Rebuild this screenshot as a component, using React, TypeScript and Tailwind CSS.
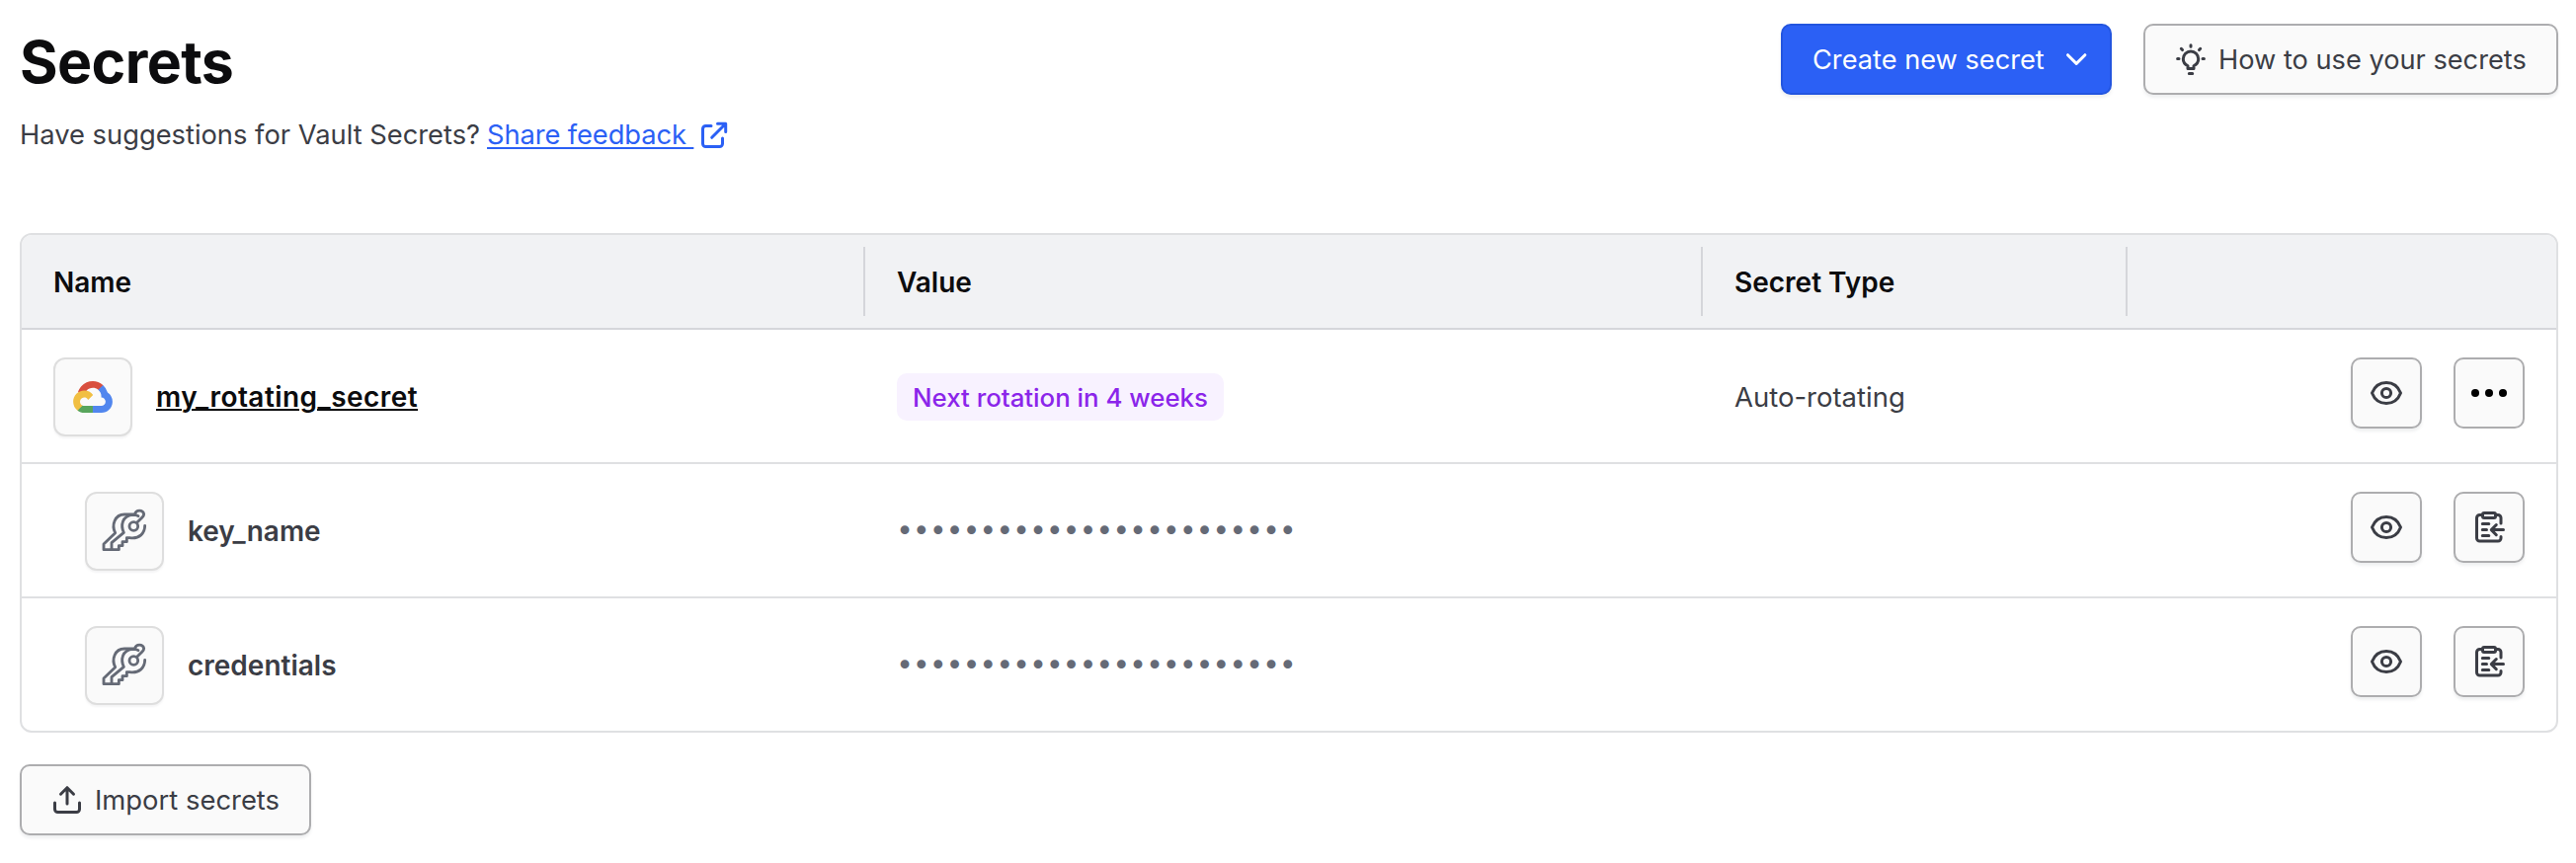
import type { ReactNode } from "react";

const stroke = {
  fill: "none",
  stroke: "currentColor",
  strokeLinecap: "round" as const,
  strokeLinejoin: "round" as const,
};

function EyeIcon() {
  return (
    <svg className="h-8 w-8" viewBox="0 0 32 32" {...stroke} strokeWidth="3">
      <path d="M1.5 16C4 9.500 9.300 5.500 16 5.500S28 9.500 30.500 16C28 22.500 22.700 26.500 16 26.500S4 22.500 1.500 16Z" />
      <circle cx="16" cy="16" r="4.600" />
    </svg>
  );
}

function ClipboardIcon() {
  return (
    <svg className="h-8 w-8" viewBox="0 0 32 32" {...stroke} strokeWidth="3">
      <path d="M8.500 3.500H6.500A3 3 0 0 0 3.500 6.500V27A3 3 0 0 0 6.500 30H25A3 3 0 0 0 28 27V25.500M23.500 3.500H25A3 3 0 0 1 28 6.500V12" />
      <rect x="9.500" y="1.500" width="13" height="5" rx="1.500" />
      <path d="M9.300 12.600H15.800M9.300 18.600H13.500M9.300 24.600H15.800M19 18.600H30.500M23.300 13.500L18.300 18.600L23.300 23.700" />
    </svg>
  );
}

function DotsIcon() {
  return (
    <svg className="h-8 w-9 text-black" viewBox="0 0 36 32" fill="currentColor">
      <circle cx="4" cy="16" r="4" />
      <circle cx="18" cy="16" r="4" />
      <circle cx="32" cy="16" r="4" />
    </svg>
  );
}

function ExternalIcon() {
  return (
    <svg className="h-7 w-7" viewBox="0 0 28 28" {...stroke} strokeWidth="3">
      <path d="M11 4.500H5.500A3 3 0 0 0 2.500 7.500V22.500A3 3 0 0 0 5.500 25.500H19.500A3 3 0 0 0 22.500 22.500V17M17.500 2.300H25.700V10.500M25.200 2.800L11.700 16.300" />
    </svg>
  );
}

function BulbIcon() {
  return (
    <svg className="h-8 w-8" viewBox="0 0 32 32" {...stroke} strokeWidth="3">
      <path d="M13 25.500V22.800C10.300 21.300 8.300 18.600 8.300 15.700A7.700 7.700 0 0 1 23.700 15.700C23.700 18.600 21.700 21.300 19 22.800V25.500ZM14.300 30.500H17.700M16 1.700V3.300M6.300 5.300L7.500 6.600M25.700 5.300L24.500 6.600M2.600 15.600H4M28 15.600H29.400" />
    </svg>
  );
}

function ChevronIcon() {
  return (
    <svg className="h-8 w-8" viewBox="0 0 32 32" {...stroke} strokeWidth="3">
      <path d="M7.500 11.700L16.200 20.400L24.900 11.700" />
    </svg>
  );
}

function UploadIcon() {
  return (
    <svg className="h-8 w-8" viewBox="0 0 32 32" {...stroke} strokeWidth="3">
      <path d="M3.500 19V25.500A3 3 0 0 0 6.500 28.500H25.500A3 3 0 0 0 28.500 25.500V19M16 20V3.700M9.500 10.200L16 3.700L22.500 10.200" />
    </svg>
  );
}

function KeysIcon() {
  return (
    <svg className="h-12 w-12 text-[#656a76]" viewBox="186 102 144 144" {...stroke} strokeWidth="8.500">
      <path d="M219 230V209L256 178C246 158 250 126 284 124C290 124 296 125 300 128" />
      <path d="M286 123H258C228 123 218 156 230 179L195 213V230H241V218H252V206H265V194H274C304 198 320 180 320 157" />
      <path d="M290 122C293 108 314 108 317 122C317 126 315 129 312 132L296 148" />
      <circle cx="286" cy="159" r="13" />
    </svg>
  );
}

function GoogleCloudLogo() {
  return (
    <svg className="h-8 w-10" viewBox="0 0 256 206">
      <path fill="#d9503f" d="M170.252 56.819l22.253-22.253 1.483-9.370C153.437-11.677 88.976-7.496 52.420 33.920 42.267 45.423 34.734 59.764 30.717 74.573l7.970-1.123 44.505-7.340 3.436-3.513c19.797-21.742 53.270-24.667 76.128-6.168l7.496.390z" />
      <path fill="#5186ee" d="M224.205 73.918a100.249 100.249 0 0 0-30.217-48.722l-31.232 31.232a55.515 55.515 0 0 1 20.379 44.037v5.544c15.350 0 27.797 12.445 27.797 27.796 0 15.352-12.446 27.573-27.797 27.573h-55.671l-5.466 5.934v33.340l5.466 5.231h55.670c39.930.311 72.553-31.494 72.864-71.424a72.303 72.303 0 0 0-31.793-60.540" />
      <path fill="#58a55c" d="M71.870 205.796h55.593V161.290H71.870a27.275 27.275 0 0 1-11.400-2.498l-7.887 2.420-22.409 22.253-1.952 7.574c12.567 9.489 27.900 14.825 43.648 14.757" />
      <path fill="#f1bf42" d="M71.870 61.425C31.940 61.664-.237 94.228.002 134.158a72.301 72.301 0 0 0 28.222 56.880l32.248-32.246c-13.990-6.322-20.208-22.786-13.887-36.776 6.320-13.990 22.786-20.208 36.775-13.888a27.796 27.796 0 0 1 13.887 13.888l32.248-32.248A72.224 72.224 0 0 0 71.870 61.425" />
    </svg>
  );
}

function IconButton({ children, label, flat }: { children: ReactNode; label: string; flat?: boolean }) {
  return (
    <button
      aria-label={label}
      className={
        flat
          ? "flex size-[72px] items-center justify-center rounded-[10px] border-2 border-[#adadaf] bg-[#fafafa]"
          : "flex size-[72px] items-center justify-center rounded-[10px] border-2 border-[#adadaf] bg-[#fafafa] shadow-[0_3px_3px_rgba(101,106,118,0.1)]"
      }
    >
      {children}
    </button>
  );
}

function Tile({ children }: { children: ReactNode }) {
  return (
    <div className="flex size-20 shrink-0 items-center justify-center rounded-xl border-2 border-[#dedede] bg-[#fafafa] shadow-[0_2px_2px_rgba(101,106,118,0.07)]">
      {children}
    </div>
  );
}

function SecretRow({ name }: { name: string }) {
  return (
    <div className="grid h-[136px] grid-cols-[854px_848px_430px_1fr] border-t-2 border-[#dfe0e2]">
      <div className="flex items-center gap-6 pt-0.5 pl-16">
        <Tile>
          <KeysIcon />
        </Tile>
        <span className="text-[28px] font-semibold">{name}</span>
      </div>
      <div className="flex items-center pl-[31px]">
        <span className="font-['DejaVu_Sans_Mono',monospace] text-[30px] tracking-[-1.2px] text-[#656a76]">{"•".repeat(24)}</span>
      </div>
      <div />
      <div className="flex items-start justify-end gap-8 pt-7 pr-8">
        <IconButton label="Reveal">
          <EyeIcon />
        </IconButton>
        <IconButton label="Copy">
          <ClipboardIcon />
        </IconButton>
      </div>
    </div>
  );
}

export default function App() {
  return (
    <main className="h-[874px] w-[2608px] bg-white px-5 pt-6 pr-[18px] font-[Inter,sans-serif] text-[#3b3d45]">
      <header className="flex h-[212px] items-start justify-between">
        <div>
          <h1 className="pt-[3px] text-[59px] leading-[72px] font-bold tracking-[-0.6px] text-[#0c0c0e]">Secrets</h1>
          <p className="flex items-center pt-[18px] text-[27.300px] leading-[40px]">
            <span>Have suggestions for Vault Secrets?</span>
            <a className="ml-[7px] flex items-center text-[#2b60f5]">
              <span className="tracking-[-0.1px] whitespace-pre underline decoration-2 underline-offset-[3px]">{"Share feedback "}</span>
              <span className="ml-[7px]">
                <ExternalIcon />
              </span>
            </a>
          </p>
        </div>
        <div className="flex gap-8">
          <button className="flex h-[72px] w-[335px] items-center justify-between rounded-[10px] border-2 border-[#2355df] bg-[#2b60f5] pr-[18px] pl-[30px] text-[27.200px] text-white shadow-[0_3px_3px_rgba(101,106,118,0.1)]">
            <span className="pt-0.5 whitespace-nowrap">Create new secret</span>
            <ChevronIcon />
          </button>
          <button className="flex h-[72px] w-[420px] items-center gap-3 rounded-[10px] border-2 border-[#adadaf] bg-[#fafafa] pl-[30px] text-[27.200px] shadow-[0_3px_3px_rgba(101,106,118,0.1)]">
            <BulbIcon />
            <span className="pt-0.5 whitespace-nowrap">How to use your secrets</span>
          </button>
        </div>
      </header>

      <section className="h-[506px] overflow-hidden rounded-xl border-2 border-[#dfe0e2]">
        <div className="grid h-24 grid-cols-[854px_848px_430px_1fr] border-b-2 border-[#d5d6da] bg-[#f1f2f4] text-[28px] font-semibold text-[#0c0c0e]">
          <div className="my-3 flex items-center border-r-2 border-[#d5d6da] pt-px pl-8">Name</div>
          <div className="my-3 flex items-center border-r-2 border-[#d5d6da] pt-px pl-8">Value</div>
          <div className="my-3 flex items-center border-r-2 border-[#d5d6da] pt-px pl-8">Secret Type</div>
          <div />
        </div>
        <div className="grid h-[134px] grid-cols-[854px_848px_430px_1fr]">
          <div className="flex items-center gap-6 pt-0.5 pl-8">
            <Tile>
              <GoogleCloudLogo />
            </Tile>
            <a className="text-[28px] font-semibold tracking-[0.45px] text-[#0c0c0e] underline decoration-2 underline-offset-2">my_rotating_secret</a>
          </div>
          <div className="flex items-center pt-0.5 pl-8">
            <span className="flex h-12 w-[331px] items-center justify-center rounded-[10px] bg-[#f8f2ff] pt-0.5 text-[25.800px] font-medium whitespace-nowrap text-[#8b25ea]">
              Next rotation in 4 weeks
            </span>
          </div>
          <div className="flex items-center pt-[3px] pl-8 text-[27.500px]">Auto-rotating</div>
          <div className="flex items-start justify-end gap-8 pt-7 pr-8">
            <IconButton label="Reveal">
              <EyeIcon />
            </IconButton>
            <IconButton label="More" flat>
              <DotsIcon />
            </IconButton>
          </div>
        </div>
        <SecretRow name="key_name" />
        <SecretRow name="credentials" />
      </section>

      <button className="mt-8 flex h-[72px] w-[295px] items-center gap-3 rounded-[10px] border-2 border-[#adadaf] bg-[#fafafa] pl-[30px] text-[27.400px] shadow-[0_3px_3px_rgba(101,106,118,0.1)]">
        <UploadIcon />
        <span className="pt-0.5 whitespace-nowrap">Import secrets</span>
      </button>
    </main>
  );
}
